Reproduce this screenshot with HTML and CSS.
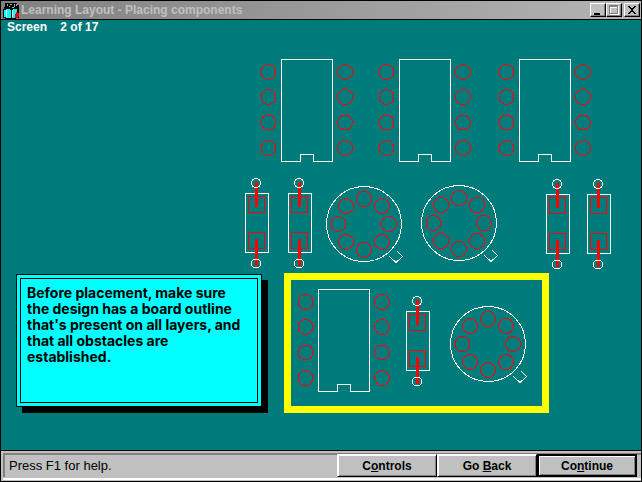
FILE: index.html
```html
<!DOCTYPE html>
<html lang="en">
<head>
<meta charset="utf-8">
<title>Learning Layout - Placing components</title>
<link rel="stylesheet" href="styles.css">
</head>
<body>
<div class="window">
  <header class="titlebar">
    <svg class="app-icon" width="17" height="17" viewBox="0 0 17 17" shape-rendering="crispEdges" aria-hidden="true">
      <path fill="#000" d="M2 1h12v2h2v4H1V5h1z"/>
      <path fill="#aaa" d="M4 2h1v2H4zM7 2h2v1H7zM11 2h1v3h-1zM6 4h1v1H6zM9 5h2v1H9zM13 2h1v2h-1z"/>
      <path fill="#000" d="M0 7h16v9h-3v1H2v-1H0z"/>
      <path fill="#0ff" d="M1 8h2V7h4v1h1v8H3v-1H1zM9 8h1V7h4v8h-1v1H9z"/>
      <path fill="#fff" d="M3 8h1v7H3zM9 8h1v7H9z"/>
      <path fill="#e00" d="M13 10h2v1h1v4h-1v1h-3v-4h1z"/>
    </svg>
    <h1 class="title">Learning Layout - Placing components</h1>
    <div class="window-controls">
      <button class="control" type="button" aria-label="Minimize">
        <svg width="12" height="10" viewBox="0 0 12 10" shape-rendering="crispEdges"><path d="M2 8h6v2H2z"/></svg>
      </button>
      <button class="control" type="button" aria-label="Maximize" disabled>
        <svg width="12" height="10" viewBox="0 0 12 10" shape-rendering="crispEdges"><path fill="#fff" d="M2 1h9v9H2z"/><path fill="#808080" d="M1 0h9v9H1z"/><path fill="#c0c0c0" d="M2 2h7v6H2z"/><path fill="#fff" d="M2 2h7v1H3v5H2z"/></svg>
      </button>
      <button class="control control-close" type="button" aria-label="Close">
        <svg width="12" height="10" viewBox="0 0 12 10" shape-rendering="crispEdges"><path d="M2 1h2v1h1v1h2V2h1V1h2v1H9v1H8v1H7v2h1v1h1v1h1v1H8V8H7V7H5v1H4v1H2V8h1V7h1V6h1V4H4V3H3V2H2z"/></svg>
      </button>
    </div>
  </header>

  <main class="lesson">
    <p class="counter">Screen    2 of 17</p>
    <svg class="board" width="640" height="430" viewBox="1 20 640 430" shape-rendering="crispEdges" role="img" aria-label="Component placement drawing">
      <defs>
        <g id="ic">
          <path class="outline" d="M0.5 0.5H51.5V102.5H32.5V95.5H19.5V102.5H0.5Z"/>
          <g class="pad">
            <circle cx="-12.5" cy="13" r="7.5"/><circle cx="-12.5" cy="38" r="7.5"/>
            <circle cx="-12.5" cy="63.5" r="7.5"/><circle cx="-12.5" cy="89" r="7.5"/>
            <circle cx="64" cy="13" r="7.5"/><circle cx="64" cy="38" r="7.5"/>
            <circle cx="64" cy="63.5" r="7.5"/><circle cx="64" cy="89" r="7.5"/>
          </g>
        </g>
        <g id="resistor">
          <path class="outline" d="M0.5 0.5H23.5V59.5H0.5Z"/>
          <path class="pad" d="M3.5 3.5h16v16h-16zM3.5 39.5h16v16h-16z"/>
          <path class="lead" d="M10-11h3v25h-3zM10 46h3v27h-3z"/>
          <circle class="outline" cx="11" cy="-10" r="4.5"/>
          <circle class="outline" cx="11" cy="70.5" r="4.5"/>
        </g>
        <g id="can">
          <circle class="outline" cx="0" cy="0" r="37.5"/>
          <path class="outline" d="M25.5 32.5L32 38.5L38.5 32.5L33 27"/>
          <g class="pad">
            <circle cx="0" cy="-25" r="7.5"/><circle cx="18" cy="-18" r="7.5"/>
            <circle cx="25" cy="0" r="7.5"/><circle cx="18" cy="18" r="7.5"/>
            <circle cx="0" cy="26" r="7.5"/><circle cx="-18" cy="18" r="7.5"/>
            <circle cx="-25.5" cy="0" r="7.5"/><circle cx="-18" cy="-18" r="7.5"/>
          </g>
        </g>
      </defs>
      <use href="#ic" x="281" y="59"/>
      <use href="#ic" x="399" y="59"/>
      <use href="#ic" x="519" y="59"/>
      <use href="#resistor" x="245" y="193"/>
      <use href="#resistor" x="288" y="193"/>
      <use href="#can" x="364" y="224"/>
      <use href="#can" x="459" y="223"/>
      <use href="#resistor" x="546" y="194"/>
      <use href="#resistor" x="587" y="194"/>
      <path class="board-edge" d="M284 273H549V413H284ZM291 280V406H542V280Z"/>
      <use href="#ic" x="318" y="289"/>
      <use href="#resistor" x="406" y="311"/>
      <use href="#can" x="488" y="344"/>
    </svg>
    <aside class="note">
      <p class="note-text">Before placement, make sure the design has a board outline that's present on all layers, and that all obstacles are established.</p>
    </aside>
  </main>

  <footer class="statusbar">
    <p class="help">Press F1 for help.</p>
    <nav class="actions">
      <button class="action" type="button">C<u>o</u>ntrols</button>
      <button class="action" type="button">Go <u>B</u>ack</button>
      <button class="action action-default" type="button">Co<u>n</u>tinue</button>
    </nav>
  </footer>
</div>
</body>
</html>
```
FILE: styles.css
```css
* {
  box-sizing: border-box;
}

body {
  margin: 0;
  font-family: "Liberation Sans", Arial, sans-serif;
  font-size: 12px;
  color: #000;
}

h1,
p {
  margin: 0;
}

.window {
  display: flex;
  flex-direction: column;
  min-height: 100vh;
  border: 1px solid #000;
  background: #c0c0c0;
}

.titlebar {
  display: flex;
  align-items: center;
  height: 19px;
  padding: 0 1px 0 2px;
  border-bottom: 1px solid #000;
  background: linear-gradient(90deg, #808080, #b4b4b4);
}

.app-icon {
  flex: none;
}

.title {
  flex: 1;
  padding-left: 1px;
  font-size: 12px;
  line-height: 18px;
  color: #c0c0c0;
  white-space: nowrap;
}

.window-controls {
  display: flex;
}

.control {
  display: flex;
  width: 16px;
  height: 14px;
  padding: 1px;
  border: 1px solid;
  border-color: #fff #000 #000 #fff;
  background: #c0c0c0;
  box-shadow: inset -1px -1px #808080;
}

.control-close {
  margin-left: 2px;
}

.lesson {
  position: relative;
  flex: 1;
  overflow: hidden;
  background: #007b7b;
}

.counter {
  position: absolute;
  top: 0;
  left: 6px;
  font-size: 12px;
  font-weight: bold;
  line-height: 14px;
  color: #fff;
  white-space: pre;
}

.board {
  display: block;
}

.outline {
  fill: none;
  stroke: #fff;
}

.pad {
  fill: none;
  stroke: #f00;
}

.lead {
  fill: #f00;
}

.board-edge {
  fill: #ff0;
  fill-rule: evenodd;
}

.note {
  position: absolute;
  top: 254px;
  left: 15px;
  width: 246px;
  height: 133px;
  padding: 3px;
  border: 1px solid #000;
  background: #0ff;
  box-shadow: 6px 6px #000;
}

.note-text {
  height: 100%;
  padding: 6px 8px 6px 6px;
  border: 1px solid #000;
  font-family: Inter, "Liberation Sans", sans-serif;
  font-size: 14px;
  font-weight: 700;
  line-height: 16px;
}

.statusbar {
  display: flex;
  align-items: flex-start;
  justify-content: space-between;
  height: 31px;
  padding: 3px 4px 0 2px;
  border-top: 1px solid #000;
  background: linear-gradient(#808080, #808080) 2px 2px / 100% 2px no-repeat,
    linear-gradient(#808080, #808080) 2px 2px / 2px 24px no-repeat,
    linear-gradient(#fff, #fff) 2px 27px / 100% 2px no-repeat,
    #c0c0c0;
}

.help {
  padding-left: 6px;
  font-size: 13px;
  line-height: 24px;
}

.actions {
  display: flex;
}

.action {
  width: 100px;
  height: 23px;
  padding: 0;
  border: 1px solid;
  border-color: #fff #000 #000 #fff;
  background: #c0c0c0;
  box-shadow: inset 1px 1px #fff, inset -1px -1px #808080;
  font-family: inherit;
  font-size: 12px;
  font-weight: bold;
  color: #000;
}

.action-default {
  border: 2px solid #000;
}
```
